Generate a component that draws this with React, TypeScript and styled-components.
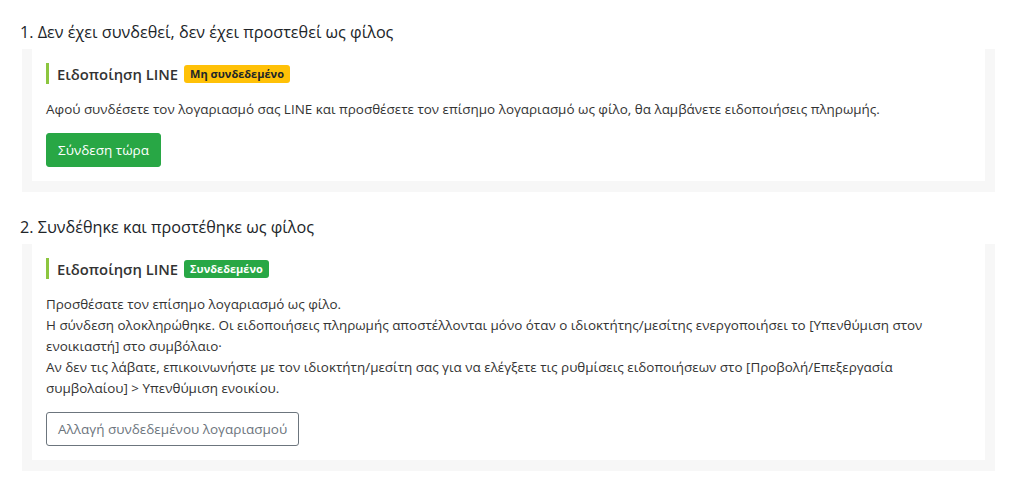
import React from 'react';
import styled, { createGlobalStyle } from 'styled-components';

const GlobalStyle = createGlobalStyle`
  body {
    margin: 0;
    background: #ffffff;
    font-family: 'Open Sans', 'Noto Sans', 'Liberation Sans', sans-serif;
    color: #333333;
  }
`;

const Page = styled.div`
  padding: 20px 20px 0 20px;
  width: 975px;
`;

const Section = styled.section`
  margin-bottom: 23px;
`;

const SectionTitle = styled.h3`
  margin: 0 0 5px 0;
  font-size: 16.2px;
  font-weight: 400;
  line-height: 24px;
  color: #212529;
`;

const Frame = styled.div`
  margin-left: 2px;
  background: #f7f7f7;
  padding: 0 10px 11px 10px;
`;

const Panel = styled.div`
  background: #ffffff;
  padding: 14px;
`;

const PanelHeader = styled.div`
  display: flex;
  align-items: center;
  gap: 6px;
  height: 21px;
  padding-left: 8px;
  border-left: 3px solid #8cc63f;
`;

const PanelTitle = styled.span`
  font-size: 14.8px;
  font-weight: 600;
  color: #333333;
`;

const Badge = styled.span<{ $tone: 'warning' | 'success' }>`
  display: inline-flex;
  align-items: center;
  height: 18px;
  padding: 0 6px;
  border-radius: 3px;
  font-size: 11px;
  font-weight: 700;
  background: ${({ $tone }) => ($tone === 'warning' ? '#ffc107' : '#28a745')};
  color: ${({ $tone }) => ($tone === 'warning' ? '#212529' : '#ffffff')};
`;

const Body = styled.div`
  margin: 15px 0 13px 0;
  font-size: 13.45px;
  line-height: 21px;
  color: #333333;
`;

const Line = styled.div``;

const Button = styled.button<{ $variant: 'primary' | 'outline' }>`
  display: inline-flex;
  align-items: center;
  height: 34px;
  padding: 0 11px;
  border-radius: 3px;
  font-family: inherit;
  font-size: 13.5px;
  cursor: pointer;
  border: 1px solid ${({ $variant }) => ($variant === 'primary' ? '#28a745' : '#6c757d')};
  background: ${({ $variant }) => ($variant === 'primary' ? '#28a745' : '#ffffff')};
  color: ${({ $variant }) => ($variant === 'primary' ? '#ffffff' : '#6c757d')};
`;

const App: React.FC = () => {
  return (
    <>
      <GlobalStyle />
      <Page>
        <Section>
          <SectionTitle>1. Δεν έχει συνδεθεί, δεν έχει προστεθεί ως φίλος</SectionTitle>
          <Frame>
            <Panel>
              <PanelHeader>
                <PanelTitle>Ειδοποίηση LINE</PanelTitle>
                <Badge $tone="warning">Μη συνδεδεμένο</Badge>
              </PanelHeader>
              <Body>
                Αφού συνδέσετε τον λογαριασμό σας LINE και προσθέσετε τον επίσημο λογαριασμό ως φίλο, θα λαμβάνετε ειδοποιήσεις πληρωμής.
              </Body>
              <Button $variant="primary">Σύνδεση τώρα</Button>
            </Panel>
          </Frame>
        </Section>

        <Section>
          <SectionTitle>2. Συνδέθηκε και προστέθηκε ως φίλος</SectionTitle>
          <Frame>
            <Panel>
              <PanelHeader>
                <PanelTitle>Ειδοποίηση LINE</PanelTitle>
                <Badge $tone="success">Συνδεδεμένο</Badge>
              </PanelHeader>
              <Body>
                <Line>Προσθέσατε τον επίσημο λογαριασμό ως φίλο.</Line>
                <Line>
                  Η σύνδεση ολοκληρώθηκε. Οι ειδοποιήσεις πληρωμής αποστέλλονται μόνο όταν ο ιδιοκτήτης/μεσίτης ενεργοποιήσει το [Υπενθύμιση στον ενοικιαστή] στο συμβόλαιο·
                </Line>
                <Line>
                  Αν δεν τις λάβατε, επικοινωνήστε με τον ιδιοκτήτη/μεσίτη σας για να ελέγξετε τις ρυθμίσεις ειδοποιήσεων στο [Προβολή/Επεξεργασία συμβολαίου] &gt; Υπενθύμιση ενοικίου.
                </Line>
              </Body>
              <Button $variant="outline">Αλλαγή συνδεδεμένου λογαριασμού</Button>
            </Panel>
          </Frame>
        </Section>
      </Page>
    </>
  );
};

export default App;
